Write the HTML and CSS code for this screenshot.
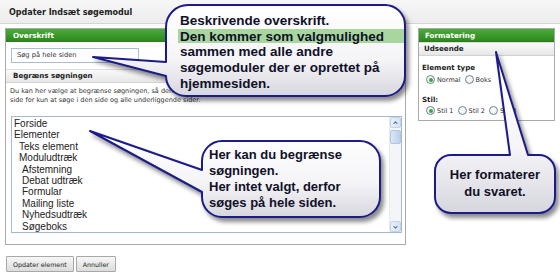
FILE: index.html
```html
<!DOCTYPE html>
<html lang="da">
<head>
<meta charset="utf-8">
<title>Opdater Indsæt søgemodul</title>
<link rel="stylesheet" href="styles.css">
</head>
<body>
<div class="page">
  <header class="topbar"><h1 class="title">Opdater Indsæt søgemodul</h1></header>
  <div class="main">
    <section class="panel panel-left">
      <div class="panel-head">Overskrift</div>
      <div class="field-row"><div class="input">Søg på hele siden</div></div>
      <div class="sub-head">Begræns søgningen</div>
      <div class="desc">
        <div class="desc-line">Du kan her vælge at begrænse søgningen, så den eventuelt kun søger i en bestemt del af hjemmesiden. Klik på en</div>
        <div class="desc-line">side for kun at søge i den side og alle underliggende sider.</div>
      </div>
      <div class="listbox">
        <ul class="tree">
          <li class="l0">Forside</li>
          <li class="l0">Elementer</li>
          <li class="l1">Teks element</li>
          <li class="l1">Moduludtræk</li>
          <li class="l2">Afstemning</li>
          <li class="l2">Debat udtræk</li>
          <li class="l2">Formular</li>
          <li class="l2">Mailing liste</li>
          <li class="l2">Nyhedsudtræk</li>
          <li class="l2">Søgeboks</li>
        </ul>
        <div class="scrollbar">
          <div class="sb-btn"><svg width="12" height="10" viewBox="0 0 12 10"><path d="M3.5 6 L6 3.5 L8.5 6" fill="none" stroke="#4a5f86" stroke-width="1.4"/></svg></div>
          <div class="sb-thumb"></div>
          <div class="sb-track"></div>
          <div class="sb-btn"><svg width="12" height="10" viewBox="0 0 12 10"><path d="M3.5 4 L6 6.5 L8.5 4" fill="none" stroke="#4a5f86" stroke-width="1.4"/></svg></div>
        </div>
      </div>
    </section>
    <section class="panel panel-right">
      <div class="panel-head">Formatering</div>
      <div class="sub-head">Udseende</div>
      <div class="fmt-body">
        <div class="label">Element type</div>
        <div class="radios">
          <span class="radio on"></span><span class="rtext">Normal</span>
          <span class="radio"></span><span class="rtext">Boks</span>
        </div>
        <div class="label label-stil">Stil:</div>
        <div class="radios radios-stil">
          <span class="radio on"></span><span class="rtext">Stil 1</span>
          <span class="radio"></span><span class="rtext">Stil 2</span>
          <span class="radio"></span><span class="rtext">Stil 3</span>
        </div>
      </div>
    </section>
  </div>
  <div class="buttons">
    <button class="btn">Opdater element</button>
    <button class="btn">Annuller</button>
  </div>

  <svg class="callouts" width="560" height="280" viewBox="0 0 560 280">
    <defs>
      <linearGradient id="fillg" x1="0" y1="0" x2="0" y2="1">
        <stop offset="0" stop-color="#ffffff"/>
        <stop offset="0.6" stop-color="#f5f5f8"/>
        <stop offset="1" stop-color="#d6d6de"/>
      </linearGradient>
      <filter id="shadow" x="-20%" y="-20%" width="140%" height="150%">
        <feDropShadow dx="3" dy="4" stdDeviation="2.2" flood-color="#000" flood-opacity="0.45"/>
      </filter>
    </defs>
    <path filter="url(#shadow)" fill="url(#fillg)" stroke="#1c1c86" stroke-width="2" stroke-linejoin="round"
      d="M188,5 H385 A20,20 0 0 1 405,25 V76 A20,20 0 0 1 385,96 H186 A20,20 0 0 1 166,76 L93,57 L166,62 V27 A22,22 0 0 1 188,5 Z"/>
    <rect x="178" y="29" width="226" height="14" fill="#a8d69e"/>
    <path filter="url(#shadow)" fill="url(#fillg)" stroke="#1c1c86" stroke-width="2" stroke-linejoin="round"
      d="M222,141 H360 A20,20 0 0 1 380,161 V197 A20,20 0 0 1 360,217 H222 A20,20 0 0 1 202,197 V192 L90,131 L202,170 V161 A20,20 0 0 1 222,141 Z"/>
    <path filter="url(#shadow)" fill="url(#fillg)" stroke="#1c1c86" stroke-width="2" stroke-linejoin="round"
      d="M451,155 H510 L496,52 L528,155 H539 A16,16 0 0 1 555,171 V197 A16,16 0 0 1 539,213 H451 A16,16 0 0 1 435,197 V171 A16,16 0 0 1 451,155 Z"/>
  </svg>
  <div class="note note-1">Beskrivende overskrift.<br>Den kommer som valgmulighed<br>sammen med alle andre<br>søgemoduler der er oprettet på<br>hjemmesiden.</div>
  <div class="note note-2">Her kan du begrænse<br>søgningen.<br>Her intet valgt, derfor<br>søges på hele siden.</div>
  <div class="note note-3">Her formaterer<br>du svaret.</div>
</div>
</body>
</html>
```
FILE: styles.css
```css
* { box-sizing: border-box; }
html, body { margin: 0; padding: 0; }
body { background: #ffffff; }

.page {
  position: relative;
  width: 560px;
  height: 280px;
  overflow: hidden;
  background: #ffffff;
  font-family: "DejaVu Sans", Verdana, sans-serif;
  color: #222;
}

.topbar {
  height: 24px;
  padding: 2px 0 0 9px;
  display: flex;
  align-items: center;
  background: linear-gradient(#f7f7f7, #ececec);
  border-bottom: 1px solid #d4d4d4;
}
.title {
  margin: 0;
  font-size: 8px;
  font-weight: bold;
  color: #222;
}

.main {
  display: flex;
  align-items: flex-start;
  gap: 12px;
  padding: 4px 0 0 5px;
}

.panel {
  border: 1px solid #a9a9a9;
  background: #fff;
}
.panel-left { width: 401px; height: 217px; }
.panel-right { width: 137px; height: 93px; }

.panel-head {
  height: 13px;
  line-height: 13px;
  padding-left: 7px;
  background: linear-gradient(#4cab3b, #2f8d1f 85%, #267a18);
  color: #fff;
  font-size: 7.2px;
  font-weight: bold;
}
.panel-right .panel-head { padding-left: 6px; }

.field-row { padding: 6px 0 0 5px; }
.input {
  width: 128px;
  height: 15px;
  border: 1px solid #a9bdd5;
  padding-left: 5px;
  line-height: 13px;
  font-size: 6.7px;
  color: #333;
  background: #fff;
}

.sub-head {
  height: 14px;
  line-height: 12px;
  padding-left: 7px;
  border-top: 1px solid #dcdcdc;
  border-bottom: 1px solid #d2d2d2;
  background: linear-gradient(#fafafa, #e7e7e7);
  font-size: 7.1px;
  font-weight: bold;
  color: #222;
}
.panel-left .sub-head { margin-top: 6px; }
.panel-right .sub-head { padding-left: 5px; }

.desc {
  margin: 4px 0 0 4px;
  font-size: 6.5px;
  line-height: 9px;
  color: #333;
}
.desc-line { white-space: nowrap; overflow: hidden; width: 392px; }

.listbox {
  display: flex;
  margin: 11px 0 0 5px;
  width: 391px;
  height: 117px;
  border: 1px solid #a5b9d0;
  background: #fff;
}
.tree {
  flex: 1;
  list-style: none;
  margin: 0;
  padding: 1px 0 0 2px;
  font-family: "Liberation Sans", Arial, sans-serif;
  font-size: 10px;
  line-height: 11.4px;
  color: #222;
}
.tree .l1 { padding-left: 5px; }
.tree .l2 { padding-left: 8px; }

.scrollbar {
  width: 12px;
  display: flex;
  flex-direction: column;
  background: #f3f5f9;
  border-left: 1px solid #e6eaf0;
}
.sb-btn {
  height: 11px;
  display: flex;
  align-items: center;
  justify-content: center;
  background: linear-gradient(90deg, #e9eff8, #d6e2f2);
  border: 1px solid #c3d2e6;
  border-radius: 2px;
}
.sb-thumb {
  height: 14px;
  margin-top: 2px;
  background: linear-gradient(90deg, #dce7f6, #bccfea);
  border: 1px solid #b2c6e2;
  border-radius: 2px;
}
.sb-track { flex: 1; }

.fmt-body { padding: 7px 0 0 3px; }
.label {
  font-size: 7.1px;
  font-weight: bold;
  line-height: 9px;
  color: #222;
}
.label-stil { margin-top: 10px; }
.radios {
  display: flex;
  align-items: center;
  height: 11px;
  margin-top: 2px;
  padding-left: 4px;
  font-size: 6.5px;
  color: #333;
}
.radios-stil { margin-top: 1px; }
.radio {
  width: 9px;
  height: 9px;
  border-radius: 50%;
  border: 1px solid #6e8296;
  background: radial-gradient(circle at 40% 35%, #ffffff, #e4e8ee);
  display: flex;
  align-items: center;
  justify-content: center;
  flex: none;
}
.radio.on::after {
  content: "";
  width: 4px;
  height: 4px;
  border-radius: 50%;
  background: #37a83a;
}
.rtext { margin: 0 4px 0 2px; }

.buttons {
  display: flex;
  gap: 2px;
  margin-top: 11px;
  padding-left: 6px;
}
.btn {
  height: 16px;
  padding: 0 6px;
  font-family: "DejaVu Sans", Verdana, sans-serif;
  font-size: 6.3px;
  color: #222;
  background: linear-gradient(#f7f7f7, #dcdcdc);
  border: 1px solid #a8a8a8;
  border-radius: 1px;
}

.callouts {
  position: absolute;
  left: 0;
  top: 0;
  overflow: visible;
  pointer-events: none;
}

.note {
  position: absolute;
  font-family: "Liberation Sans", Arial, sans-serif;
  font-weight: bold;
  color: #101028;
  white-space: nowrap;
}
.note-1 { left: 180px; top: 13px; font-size: 13.5px; line-height: 15.7px; }
.note-2 { left: 209px; top: 147px; font-size: 13px; line-height: 16px; }
.note-3 { left: 435px; top: 167px; width: 120px; text-align: center; font-size: 13px; line-height: 16.5px; }
```
